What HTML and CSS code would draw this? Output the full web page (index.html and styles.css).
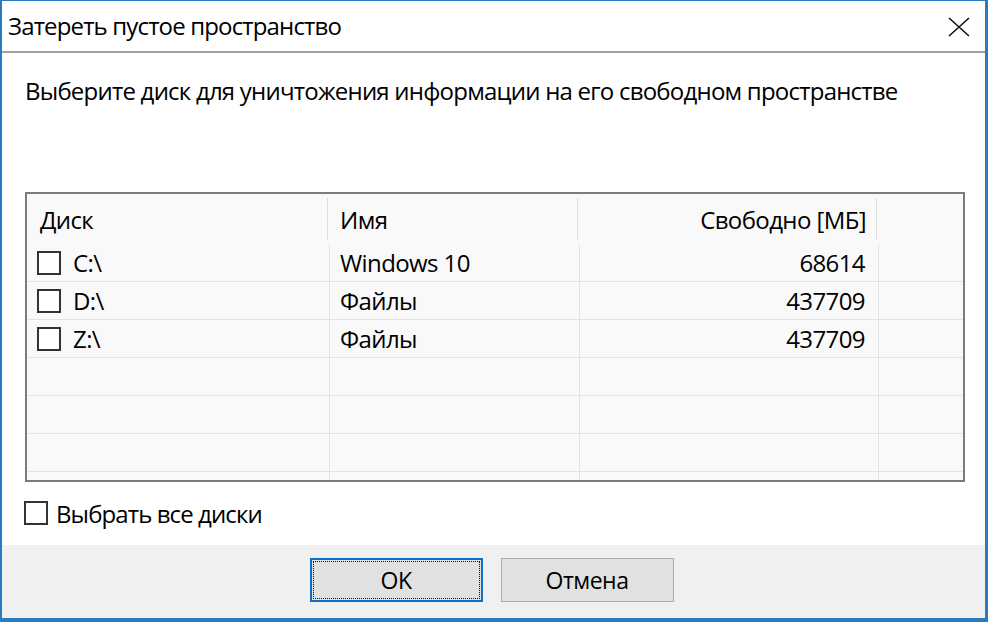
FILE: index.html
```html
<!DOCTYPE html>
<html lang="ru">
<head>
<meta charset="utf-8">
<title>Затереть пустое пространство</title>
<link rel="stylesheet" href="styles.css">
</head>
<body>
<div class="window">
  <div class="titlebar">
    <span class="title">Затереть пустое пространство</span>
    <span class="close">
      <svg width="24" height="22" viewBox="0 0 24 22"><path d="M2 2 L22 20 M22 2 L2 20" stroke="#111" stroke-width="1.6" fill="none"/></svg>
    </span>
  </div>
  <div class="content">
    <div class="instruction">Выберите диск для уничтожения информации на его свободном пространстве</div>
    <div class="table">
      <div class="thead">
        <div class="th">Диск</div>
        <div class="th">Имя</div>
        <div class="th right">Свободно [МБ]</div>
        <div class="th last"></div>
      </div>
      <div class="tbody">
        <div class="tr">
          <div class="td"><span class="cb"></span>C:\</div>
          <div class="td">Windows 10</div>
          <div class="td right">68614</div>
          <div class="td last"></div>
        </div>
        <div class="tr">
          <div class="td"><span class="cb"></span>D:\</div>
          <div class="td">Файлы</div>
          <div class="td right">437709</div>
          <div class="td last"></div>
        </div>
        <div class="tr">
          <div class="td"><span class="cb"></span>Z:\</div>
          <div class="td">Файлы</div>
          <div class="td right">437709</div>
          <div class="td last"></div>
        </div>
        <div class="tr">
          <div class="td"></div><div class="td"></div><div class="td"></div><div class="td last"></div>
        </div>
        <div class="tr">
          <div class="td"></div><div class="td"></div><div class="td"></div><div class="td last"></div>
        </div>
        <div class="tr">
          <div class="td"></div><div class="td"></div><div class="td"></div><div class="td last"></div>
        </div>
        <div class="tr filler">
          <div class="td"></div><div class="td"></div><div class="td"></div><div class="td last"></div>
        </div>
      </div>
    </div>
    <label class="selectall"><span class="cb"></span>Выбрать все диски</label>
  </div>
  <div class="footer">
    <button class="btn default"><span>OK</span></button>
    <button class="btn">Отмена</button>
  </div>
</div>
</body>
</html>
```

FILE: styles.css
```css
* { box-sizing: border-box; }
html, body { margin: 0; padding: 0; }
body {
  width: 988px;
  height: 622px;
  overflow: hidden;
  font-family: "Open Sans", "Noto Sans", sans-serif;
  color: #000;
  background: #2a7ac0;
}
.window {
  width: 988px;
  height: 622px;
  border-style: solid;
  border-color: #2a7ac0;
  border-width: 1px 3px 4px 2px;
  background: #fff;
  display: flex;
  flex-direction: column;
}
.titlebar {
  height: 52px;
  flex: none;
  background: #fff;
  border-bottom: 2px solid #a2a2a2;
  display: flex;
  align-items: center;
  justify-content: space-between;
  padding: 0 14px 0 6px;
}
.title {
  font-size: 24px;
  letter-spacing: -0.85px;
  line-height: 30px;
}
.close { display: flex; margin-top: 2px; }
.content {
  height: 492px;
  flex: none;
  padding: 0 20px 0 23px;
  display: flex;
  flex-direction: column;
  background: #fff;
}
.instruction {
  margin-top: 23px;
  height: 30px;
  line-height: 30px;
  font-size: 24px;
  letter-spacing: -0.78px;
  white-space: nowrap;
}
.table {
  margin-top: 86px;
  height: 290px;
  border: 2px solid #7b7b7b;
  background: #f9f9f9;
  display: flex;
  flex-direction: column;
  font-size: 24px;
  letter-spacing: -0.6px;
}
.thead, .tr {
  display: grid;
  grid-template-columns: 303px 250px 299px 1fr;
}
.thead { height: 50px; }
.th {
  position: relative;
  display: flex;
  align-items: center;
  padding: 0 13px 0 13px;
}
.th + .th { padding-left: 10px; }
.th:not(.last)::after {
  content: "";
  position: absolute;
  right: 2px;
  top: 4px;
  bottom: 4px;
  width: 1px;
  background: #dedede;
}
.tbody { flex: 1; display: flex; flex-direction: column; }
.tr {
  height: 38px;
  border-bottom: 1px solid #e3e3e3;
}
.tr.filler { flex: 1; height: auto; border-bottom: 0; }
.td {
  display: flex;
  align-items: center;
  border-right: 1px solid #e3e3e3;
  padding: 0 13px 0 10px;
  white-space: nowrap;
}
.td + .td { padding-left: 10px; }
.td.last { border-right: 0; }
.right { justify-content: flex-end; }
.cb {
  width: 24px;
  height: 24px;
  border: 2px solid #333;
  background: #fff;
  flex: none;
  margin-right: 12px;
}
.selectall {
  margin-top: 17px;
  height: 28px;
  display: flex;
  align-items: center;
  font-size: 24px;
  letter-spacing: -0.9px;
  margin-left: -1px;
}
.selectall .cb { margin-right: 8px; }
.footer {
  flex: 1;
  background: #f0f0f0;
  display: flex;
  justify-content: center;
  align-items: flex-start;
  gap: 18px;
  padding-top: 13px;
  padding-right: 4px;
}
.btn {
  width: 173px;
  height: 44px;
  background: #e1e1e1;
  border: 1px solid #adadad;
  font-family: "Open Sans", "Noto Sans", sans-serif;
  font-size: 23px;
  letter-spacing: -0.5px;
  color: #000;
  padding: 0;
  display: flex;
  align-items: center;
  justify-content: center;
}
.btn.default {
  border: 2px solid #0a6fc9;
  outline: 1px dotted #111;
  outline-offset: -4px;
}
```
